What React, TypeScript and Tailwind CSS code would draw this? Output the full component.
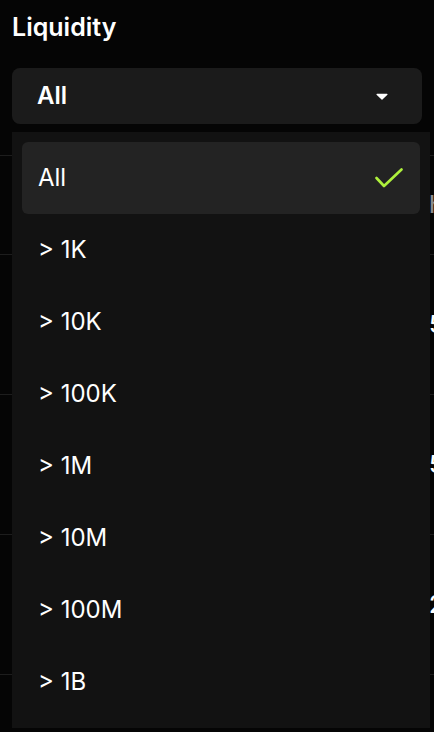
import { useState } from 'react';

const OPTIONS = ['All', '> 1K', '> 10K', '> 100K', '> 1M', '> 10M', '> 100M', '> 1B'];

// rows of the table that sits under the open menu; only their first glyph peeks out
const ROWS = [
  { h: 'h-[99px]', text: 'h', tone: 'text-[#8a8a8a]' },
  { h: 'h-[140px]', text: '5', tone: 'text-white' },
  { h: 'h-[140px]', text: '5', tone: 'text-white' },
  { h: 'h-[140px]', text: '2', tone: 'text-white' },
];

function Caret() {
  return (
    <svg width="12" height="7" viewBox="0 0 12 7" aria-hidden>
      <path d="M1 0.8h10a0.6 0.6 0 0 1 0.45 1L6.45 6.4a0.6 0.6 0 0 1-0.9 0L0.55 1.8A0.6 0.6 0 0 1 1 0.8z" fill="#ffffff" />
    </svg>
  );
}

function Check() {
  return (
    <svg width="28" height="20" viewBox="0 0 28 20" aria-hidden>
      <polyline
        points="1.5,10 9,18 26.5,1.5"
        fill="none"
        stroke="#aef03c"
        strokeWidth="2.6"
        strokeLinecap="round"
        strokeLinejoin="round"
      />
    </svg>
  );
}

export default function App() {
  const [selected, setSelected] = useState('All');

  return (
    <div
      className="relative h-[732px] w-full overflow-hidden bg-[#050505] text-white"
      style={{ fontFamily: 'Inter, "Noto Sans", sans-serif' }}
    >
      <h1 className="px-3 pt-[11px] text-[25px] font-semibold leading-8">
        Liquidity
      </h1>

      <div className="px-3 pt-[25px]">
        <button className="flex h-[56px] w-full items-center justify-between rounded-lg bg-[#1b1b1b] pl-[25px] pr-[34px] text-[24px] font-semibold">
          <span>{selected}</span>
          <Caret />
        </button>
      </div>

      <div>
        <div className="h-[32px] border-b border-[#1d1d1d]" />
        {ROWS.map((row, i) => (
          <div
            key={i}
            className={`grid ${row.h} grid-cols-[429px_1fr] items-center border-b border-[#1d1d1d]`}
          >
            <div />
            <span className={`text-[24px] font-medium ${row.tone}`}>{row.text}</span>
          </div>
        ))}
      </div>

      <div className="absolute left-3 top-[132px] w-[418px] bg-[#121212] p-[10px]">
        {OPTIONS.map((opt) => {
          const active = opt === selected;
          return (
            <div
              key={opt}
              onClick={() => setSelected(opt)}
              className={`flex h-[72px] items-center justify-between rounded-md pl-4 pr-[17px] text-[24px] font-normal ${
                active ? 'bg-[#232323]' : ''
              }`}
            >
              <span>{opt}</span>
              {active && <Check />}
            </div>
          );
        })}
      </div>
    </div>
  );
}
